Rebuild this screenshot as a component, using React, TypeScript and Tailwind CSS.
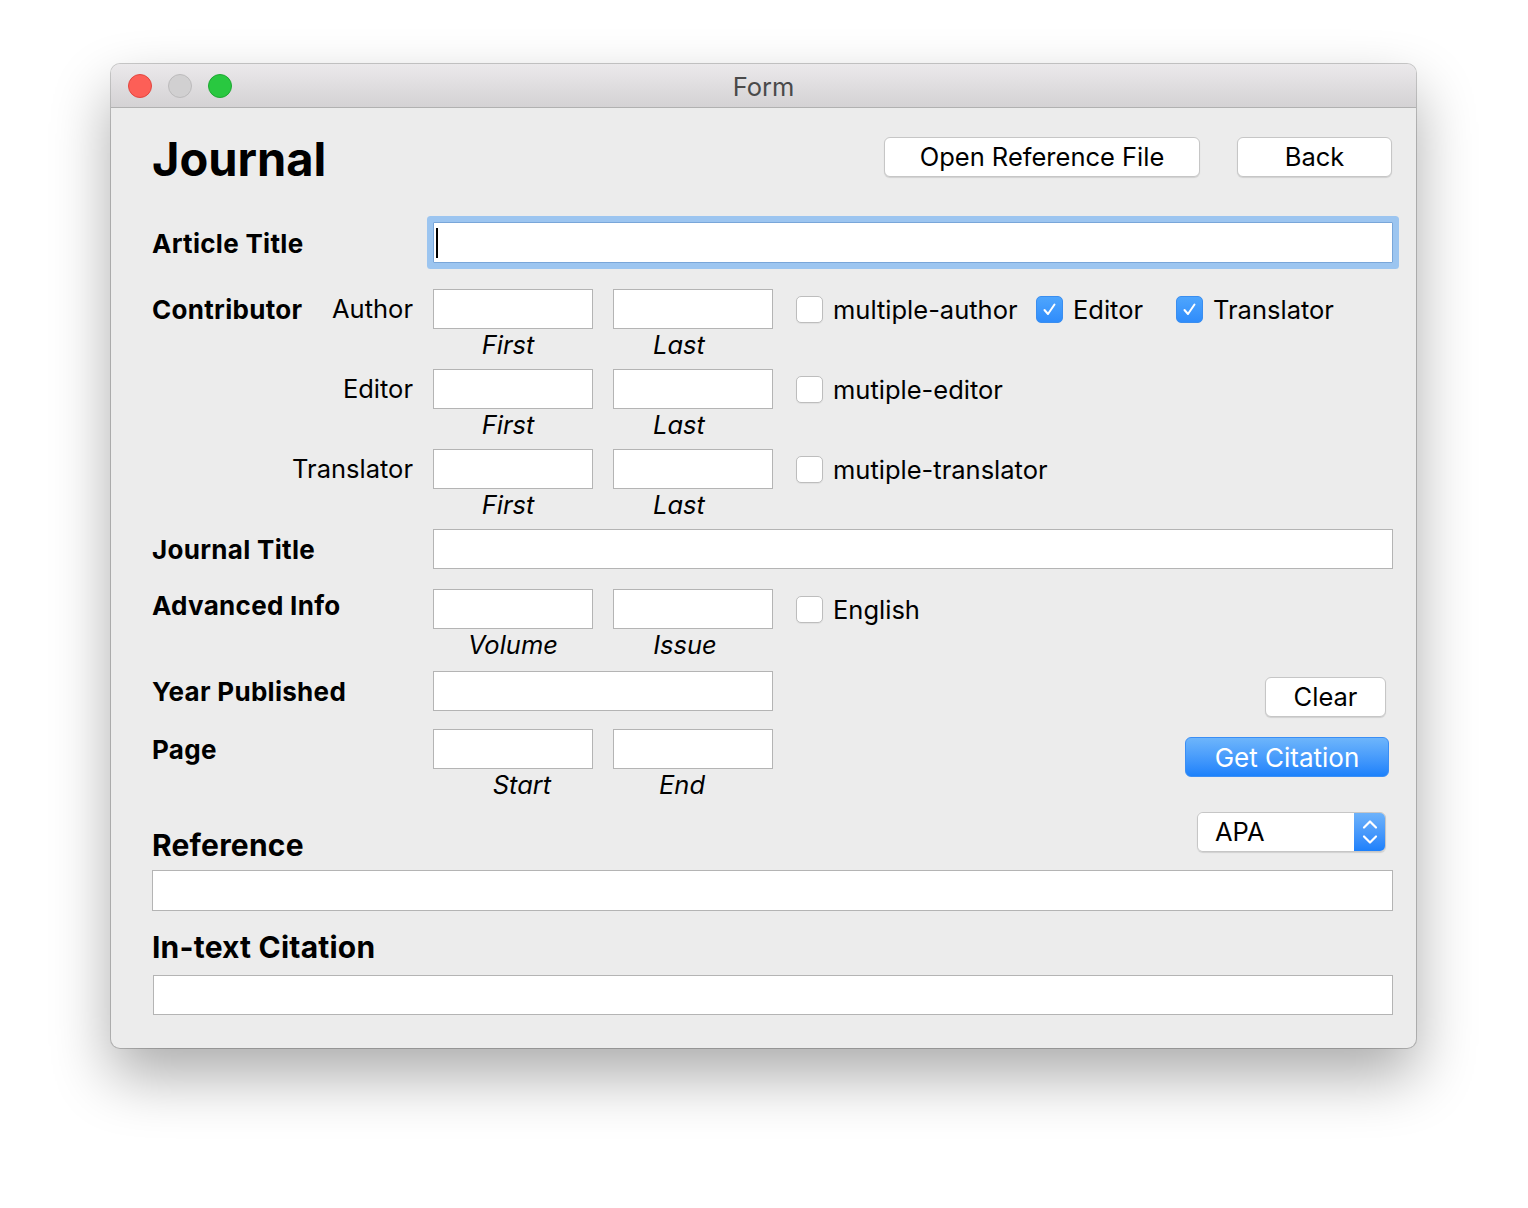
import React from "react";

const font = "font-['Inter','Liberation_Sans',sans-serif]";

function TextBox({ className = "" }: { className?: string }) {
  return <div className={`h-[40px] bg-white border border-[#b4b4b4] ${className}`} />;
}

function Checkbox({ checked = false }: { checked?: boolean }) {
  if (checked) {
    return (
      <div className="w-[27px] h-[27px] rounded-[5px] bg-gradient-to-b from-[#4ea5fd] to-[#2f8cfb] border border-[#3a8ef0] flex items-center justify-center">
        <svg width="15" height="15" viewBox="0 0 15 15" fill="none">
          <path d="M2.5 8 L6 12 L12.5 2.5" stroke="white" strokeWidth="2" strokeLinecap="round" strokeLinejoin="round" />
        </svg>
      </div>
    );
  }
  return (
    <div className="w-[27px] h-[27px] rounded-[5px] bg-white border border-[#bdbdbd] shadow-[0_1px_1px_rgba(0,0,0,0.06)]" />
  );
}

function CheckItem({ label, checked, className = "" }: { label: string; checked?: boolean; className?: string }) {
  return (
    <div className={`flex items-center gap-[10px] shrink-0 ${className}`}>
      <Checkbox checked={checked} />
      <span className="text-[25.5px] text-black pt-[2px]">{label}</span>
    </div>
  );
}

function Pair({ left, right, leftShift = "", rightShift = "" }: { left: string; right: string; leftShift?: string; rightShift?: string }) {
  return (
    <div className="flex flex-col shrink-0">
      <div className="flex gap-[20px]">
        <TextBox className="w-[160px]" />
        <TextBox className="w-[160px]" />
      </div>
      <div className="flex gap-[20px] h-[40px] leading-[32px] text-[25.5px] italic text-black">
        <div className={`w-[160px] text-center ${leftShift}`}>{left}</div>
        <div className={`w-[160px] text-center ${rightShift}`}>{right}</div>
      </div>
    </div>
  );
}

function Label({ children, className = "" }: { children: React.ReactNode; className?: string }) {
  return (
    <div className={`w-[281px] shrink-0 h-[40px] flex items-center text-[26px] tracking-[0.3px] font-bold text-black ${className}`}>
      {children}
    </div>
  );
}

function ContributorRow({ title, sub, children }: { title?: string; sub: string; children?: React.ReactNode }) {
  return (
    <div className="flex">
      <div className="w-[281px] shrink-0 h-[40px] flex items-center justify-between pr-[20px] text-black">
        <span className="font-bold text-[26px] tracking-[0.3px]">{title}</span>
        <span className="text-[25.5px]">{sub}</span>
      </div>
      <Pair left="First" right="Last" leftShift="pr-[10px]" rightShift="pr-[28px]" />
      <div className="h-[40px] flex items-center ml-[23px]">{children}</div>
    </div>
  );
}

export default function App() {
  return (
    <div className={`min-h-screen bg-white pt-[64px] pl-[111px] ${font}`}>
      <div className="w-[1305px] h-[984px] rounded-[9px] bg-[#ececec] overflow-hidden flex flex-col shadow-[0_28px_60px_rgba(0,0,0,0.33),0_0_0_1px_rgba(0,0,0,0.2)]">
        <div className="h-[44px] shrink-0 grid grid-cols-[1fr_auto_1fr] items-center bg-gradient-to-b from-[#ebe9eb] to-[#d4d2d4] border-b border-[#b1b1b1]">
          <div className="flex items-center gap-[16px] pl-[17px]">
            <div className="w-[24px] h-[24px] rounded-full bg-[#fd5f57] border border-[#e2463f]" />
            <div className="w-[24px] h-[24px] rounded-full bg-[#d1d0d1] border border-[#bcbbbc]" />
            <div className="w-[24px] h-[24px] rounded-full bg-[#29c840] border border-[#1ea832]" />
          </div>
          <div className="text-[25.5px] text-[#4a4a4a] pt-[3px]">Form</div>
          <div />
        </div>

        <div className="flex-1 pl-[41px] pr-[23px] pt-[29px] flex flex-col">
          <div className="h-[40px] flex items-center justify-between">
            <h1 className="text-[47px] font-bold leading-none text-black pt-[2px]">Journal</h1>
            <div className="flex gap-[37px] mr-[1px]">
              <button className="w-[316px] h-[40px] bg-white rounded-[6px] border border-[#c6c6c6] shadow-[0_1px_1px_rgba(0,0,0,0.12)] text-[25.5px] text-black">
                Open Reference File
              </button>
              <button className="w-[155px] h-[40px] bg-white rounded-[6px] border border-[#c6c6c6] shadow-[0_1px_1px_rgba(0,0,0,0.12)] text-[25.5px] text-black">
                Back
              </button>
            </div>
          </div>

          <div className="flex mt-[45px]">
            <Label className="pt-[3px]">Article Title</Label>
            <div className="relative flex-1 h-[41px] bg-white border border-[#79a6d9] rounded-[1px] shadow-[0_0_0_6px_#9cc5f0]">
              <span className="absolute left-[2px] top-[5px] w-[2px] h-[30px] bg-black" />
            </div>
          </div>

          <div className="mt-[26px] flex flex-col">
            <ContributorRow title="Contributor" sub="Author">
              <CheckItem label="multiple-author" className="w-[240px]" />
              <CheckItem label="Editor" checked className="w-[140px]" />
              <CheckItem label="Translator" checked />
            </ContributorRow>
            <ContributorRow sub="Editor">
              <CheckItem label="mutiple-editor" />
            </ContributorRow>
            <ContributorRow sub="Translator">
              <CheckItem label="mutiple-translator" />
            </ContributorRow>
          </div>

          <div className="flex">
            <Label className="pt-[1px]">Journal Title</Label>
            <TextBox className="flex-1" />
          </div>

          <div className="flex mt-[20px]">
            <div className="w-[281px] shrink-0 h-[32px] flex items-center text-[26px] tracking-[0.3px] font-bold text-black">Advanced Info</div>
            <Pair left="Volume" right="Issue" rightShift="pr-[16px]" />
            <div className="h-[40px] flex items-center ml-[23px]">
              <CheckItem label="English" />
            </div>
          </div>

          <div className="flex mt-[2px]">
            <Label className="pt-[1px]">Year Published</Label>
            <TextBox className="w-[340px]" />
            <button className="ml-auto mt-[6px] mr-[7px] w-[121px] h-[40px] bg-white rounded-[6px] border border-[#c6c6c6] shadow-[0_1px_1px_rgba(0,0,0,0.12)] text-[25.5px] text-black">
              Clear
            </button>
          </div>

          <div className="flex mt-[12px]">
            <Label>Page</Label>
            <Pair left="Start" right="End" leftShift="pl-[18px]" rightShift="pr-[22px]" />
            <button className="ml-auto mt-[8px] mr-[4px] w-[204px] h-[40px] rounded-[6px] bg-gradient-to-b from-[#6db5fb] to-[#1b81fb] border border-[#3a8ef5] text-[26px] text-white">
              Get Citation
            </button>
          </div>

          <div className="flex justify-between mt-[3px]">
            <div className="mt-[15px] leading-[36px] text-[30px] tracking-[0.2px] font-bold text-black">Reference</div>
            <div className="mr-[7px] w-[189px] h-[40px] flex rounded-[6px] border border-[#c6c6c6] shadow-[0_1px_1px_rgba(0,0,0,0.12)] overflow-hidden">
              <div className="flex-1 bg-white flex items-center pl-[17px] text-[25.5px] text-black">APA</div>
              <div className="w-[31px] bg-gradient-to-b from-[#6db2fa] to-[#1c80fb] flex items-center justify-center">
                <svg width="18" height="30" viewBox="0 0 18 30" fill="none">
                  <path d="M3 10.5 L9 4.5 L15 10.5" stroke="white" strokeWidth="2.2" strokeLinecap="round" strokeLinejoin="round" />
                  <path d="M3 19.5 L9 25.5 L15 19.5" stroke="white" strokeWidth="2.2" strokeLinecap="round" strokeLinejoin="round" />
                </svg>
              </div>
            </div>
          </div>

          <div className="mt-[7px] h-[41px] bg-white border border-[#b4b4b4]" />

          <div className="mt-[18px] leading-[36px] text-[30px] tracking-[0.2px] font-bold text-black">In-text Citation</div>

          <div className="mt-[10px] ml-[1px] h-[40px] bg-white border border-[#b4b4b4]" />
        </div>
      </div>
    </div>
  );
}
